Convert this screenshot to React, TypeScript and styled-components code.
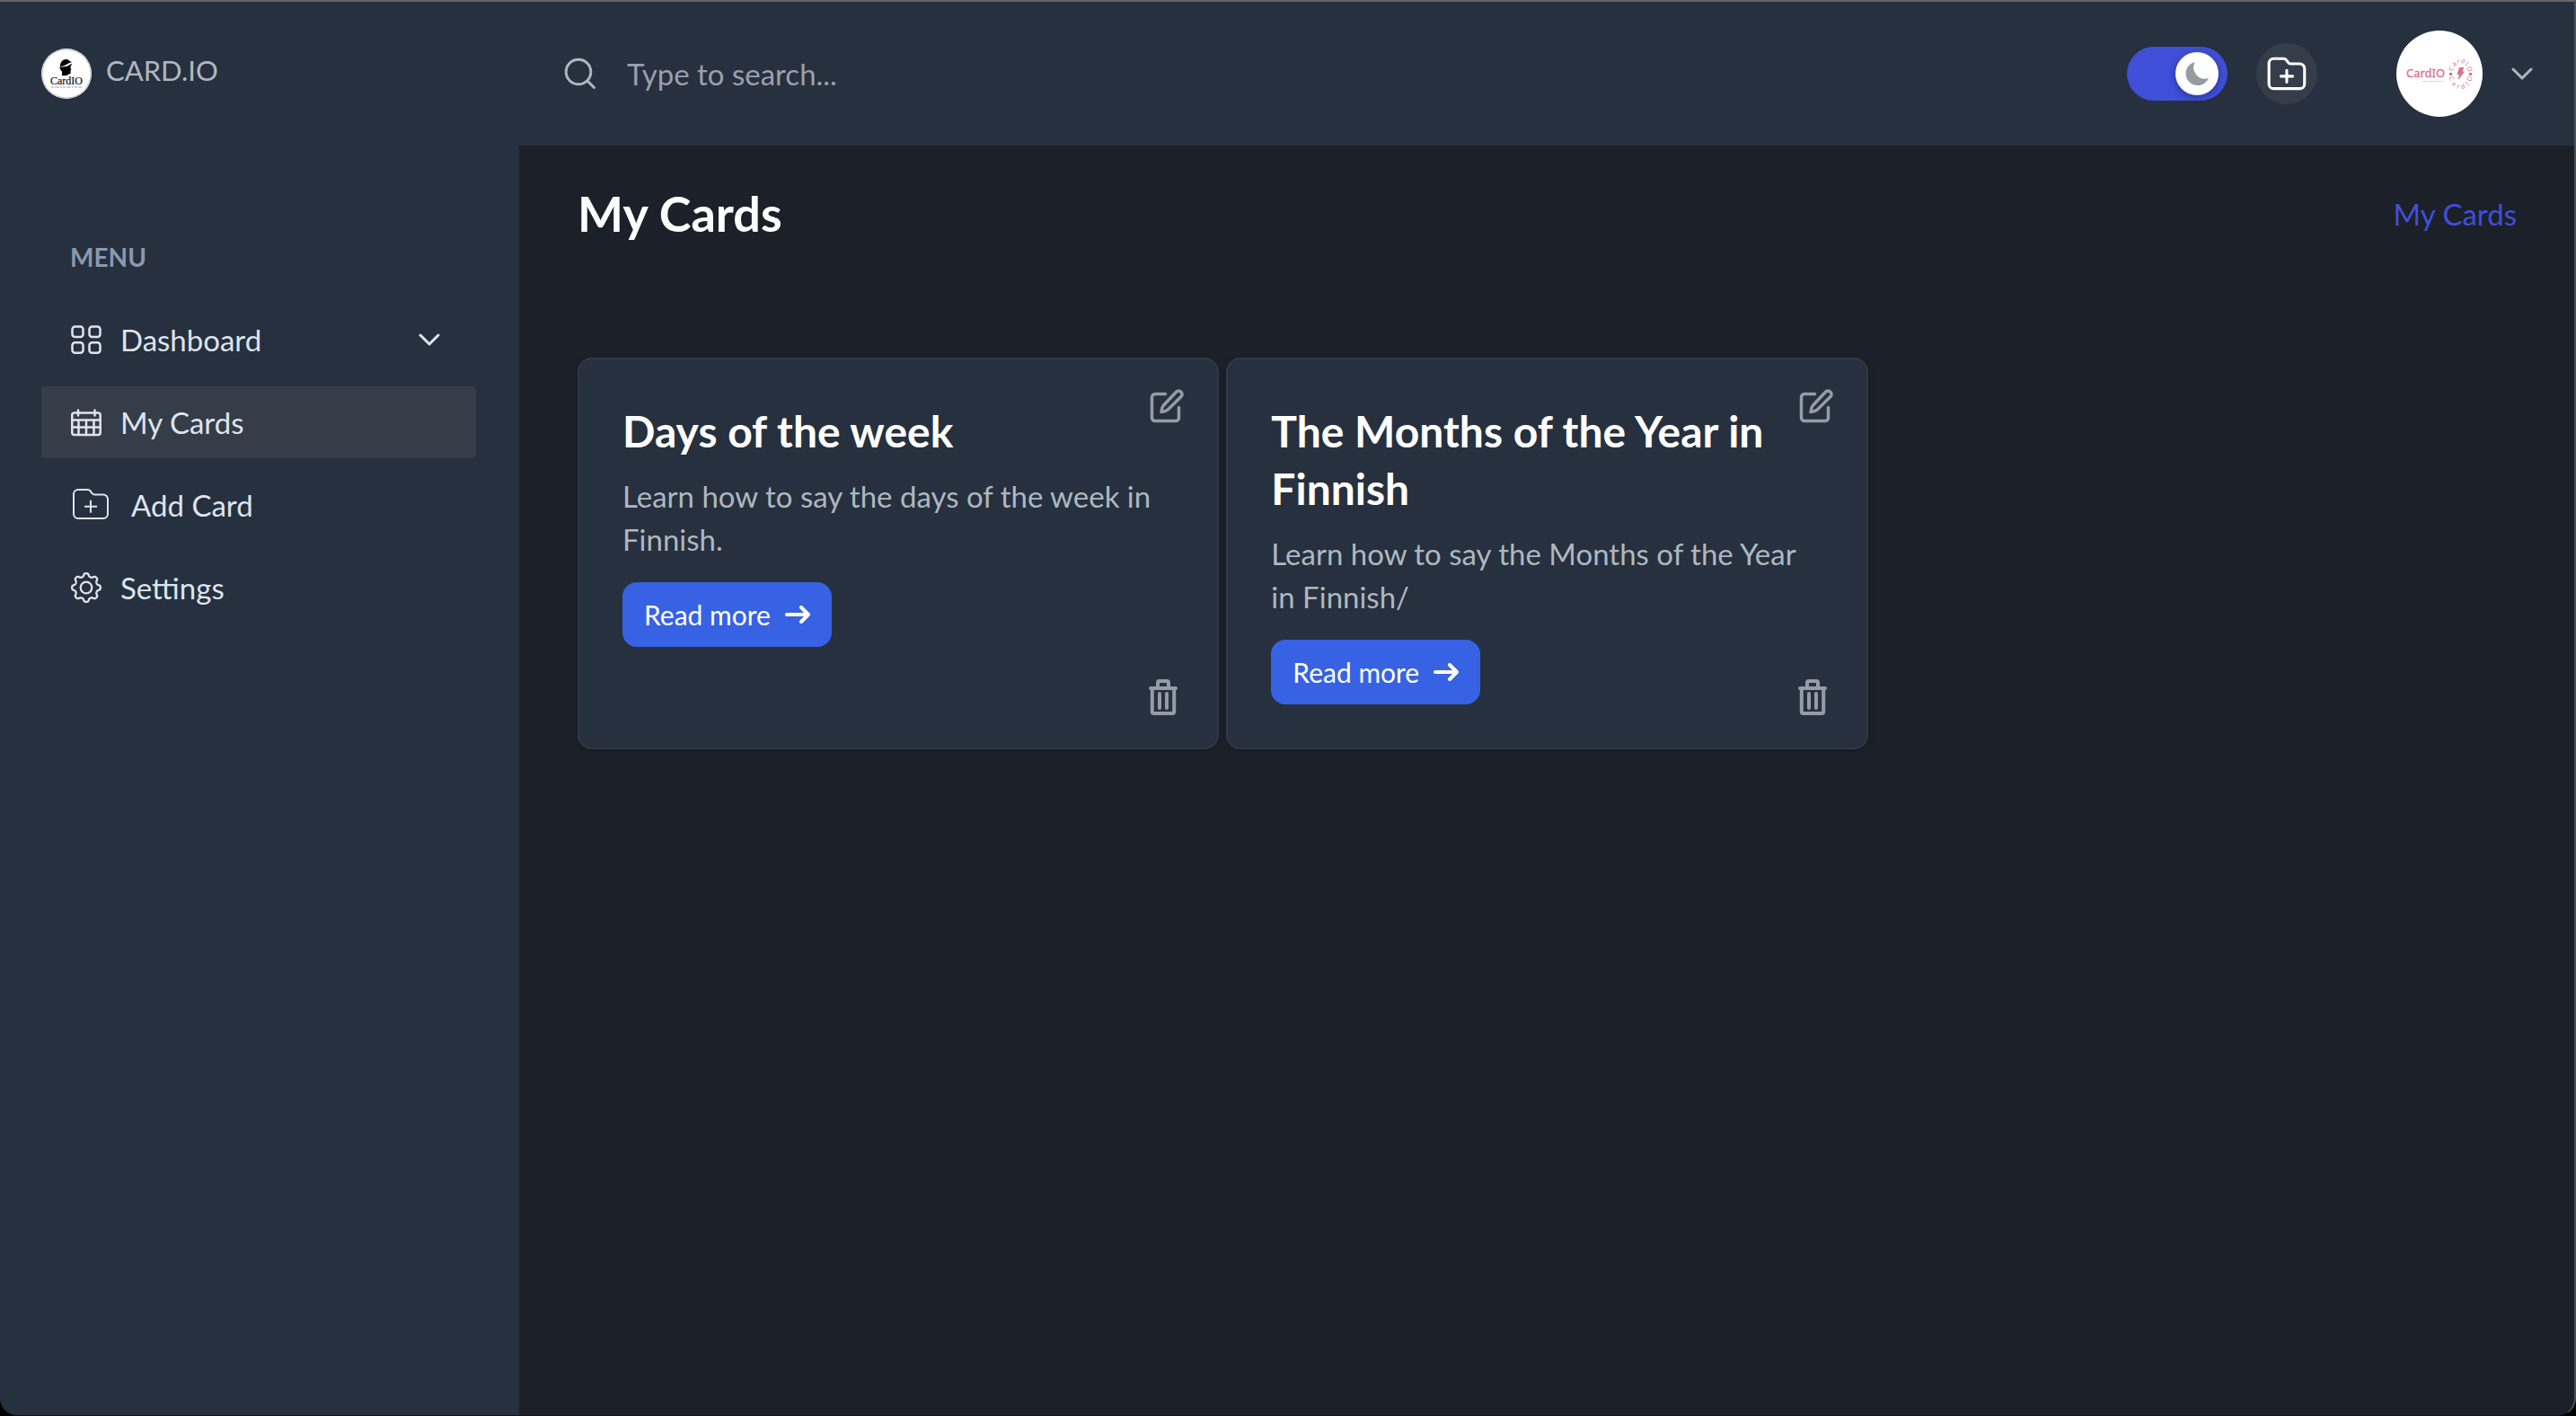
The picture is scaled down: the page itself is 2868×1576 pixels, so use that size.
import React from "react";
import styled, { createGlobalStyle } from "styled-components";

const color = {
  panel: "#26303e",
  page: "#1c2029",
  raised: "#343d48",
  line: "#303a46",
  text: "#dee4ee",
  muted: "#aeb7c0",
  faint: "#8a99af",
  primary: "#404fd8",
  action: "#3762e3",
  icon: "#949ca6",
  pink: "#d6718f",
};

const GlobalStyle = createGlobalStyle`
  *, *::before, *::after { box-sizing: border-box; }
  body {
    margin: 0;
    background: #000;
    font-family: Lato, "Open Sans", sans-serif;
    font-size: 33px;
    line-height: 48px;
    color: ${color.muted};
  }
  h1, h2, p, ul { margin: 0; padding: 0; }
  ul { list-style: none; }
  a { color: inherit; text-decoration: none; }
  button, input { font: inherit; color: inherit; }
  button { border: 0; padding: 0; background: none; cursor: pointer; }
  svg { display: block; flex: none; }
`;

const Shell = styled.div`
  display: flex;
  min-height: 100vh;
  overflow: hidden;
  border-top: 2px solid #696565;
  border-right: 2px solid #4b4f57;
  border-bottom: 1px solid #14161e;
  border-radius: 0 0 20px 20px;
  background: ${color.page};
`;

const Sidebar = styled.aside`
  flex: none;
  width: 578px;
  padding: 52px 48px 52px 46px;
  background: ${color.panel};
`;

const Brand = styled.a`
  display: flex;
  align-items: flex-start;
  gap: 16px;
  font-size: 31px;
`;

const MenuTitle = styled.h2`
  margin: 156px 0 32px;
  padding-left: 32px;
  font-size: 28px;
  line-height: 40px;
  font-weight: 700;
  color: ${color.faint};
`;

const MenuList = styled.ul`
  display: flex;
  flex-direction: column;
  gap: 12px;
`;

const MenuLink = styled.a<{ $active?: boolean }>`
  display: flex;
  align-items: center;
  gap: 20px;
  padding: 16px 40px 16px 32px;
  border-radius: 4px;
  color: ${color.text};
  background: ${(p) => (p.$active ? color.raised : "transparent")};
`;

const MenuLabel = styled.span`
  flex: 1;
`;

const Column = styled.div`
  flex: 1;
  min-width: 0;
`;

const Header = styled.header`
  display: flex;
  align-items: center;
  height: 160px;
  padding: 0 46px 0 50px;
  background: ${color.panel};
`;

const Search = styled.label`
  display: flex;
  flex: 1;
  align-items: center;
  gap: 34px;
`;

const SearchInput = styled.input`
  flex: 1;
  min-width: 0;
  padding: 0;
  border: 0;
  outline: 0;
  background: transparent;
  &::placeholder {
    color: #9b9fac;
    opacity: 1;
  }
`;

const Actions = styled.div`
  display: flex;
  align-items: center;
  gap: 32px;
`;

const Toggle = styled.label`
  display: flex;
  align-items: center;
  justify-content: flex-end;
  position: relative;
  width: 112px;
  height: 60px;
  padding: 0 10px;
  border-radius: 30px;
  background: ${color.primary};
`;

const ToggleInput = styled.input`
  position: absolute;
  inset: 0;
  width: 100%;
  height: 100%;
  margin: 0;
  opacity: 0;
  cursor: pointer;
`;

const Knob = styled.span`
  display: grid;
  place-items: center;
  width: 48px;
  height: 48px;
  border-radius: 50%;
  background: #fff;
  box-shadow: 0 2px 8px rgba(0, 0, 0, 0.35);
`;

const RoundButton = styled.button`
  display: grid;
  place-items: center;
  width: 68px;
  height: 68px;
  padding: 2px 0 0 2px;
  border-radius: 50%;
  background: ${color.raised};
  color: #fff;
`;

const Profile = styled.button`
  display: flex;
  align-items: center;
  gap: 32px;
  margin-left: 56px;
`;

const Main = styled.main`
  padding: 48px 64px 48px 65px;
`;

const Heading = styled.div`
  display: flex;
  align-items: center;
  justify-content: space-between;
  margin-bottom: 132px;
`;

const PageTitle = styled.h1`
  font-size: 54px;
  line-height: 56px;
  font-weight: 700;
  color: #fff;
`;

const Crumb = styled.a`
  && {
    color: ${color.primary};
  }
`;

const CardGrid = styled.div`
  display: grid;
  grid-template-columns: repeat(3, minmax(0, 1fr));
  gap: 8px;
`;

const Card = styled.article`
  position: relative;
  padding: 48px;
  border: 2px solid ${color.line};
  border-radius: 16px;
  background: ${color.panel};
  box-shadow: 0 2px 6px rgba(0, 0, 0, 0.2);
`;

const CardTitle = styled.h2`
  margin-bottom: 16px;
  font-size: 48px;
  line-height: 64px;
  font-weight: 700;
  color: #fff;
`;

const CardText = styled.p`
  margin-bottom: 24px;
`;

const ReadMore = styled.a`
  && {
    display: inline-flex;
    align-items: center;
    gap: 16px;
    padding: 16px 24px;
    border-radius: 16px;
    font-size: 30px;
    line-height: 40px;
    color: #fff;
    background: ${color.action};
    vertical-align: top;
  }
`;

const EditButton = styled.button`
  position: absolute;
  top: 32px;
  right: 36px;
  color: ${color.icon};
`;

const DeleteButton = styled.button`
  position: absolute;
  right: 44px;
  bottom: 36px;
  color: ${color.icon};
`;

const line = {
  fill: "none",
  stroke: "currentColor",
  strokeLinecap: "round",
  strokeLinejoin: "round",
} as const;

const BrandLogo = () => (
  <svg width="56" height="56" viewBox="0 0 56 56" aria-hidden="true">
    <circle cx="28" cy="28" r="28" fill="#fff" />
    <circle cx="28" cy="28" r="27" fill="none" stroke="#b9bcc1" strokeWidth="1" />
    <path
      d="M21 21.5C20.4 15.5 23.5 12 27.5 11.9c2-.1 3.3.7 4 2l2.6 1.2-3.4 1.2-5 2.8-4.2 1.2z"
      fill="#000"
    />
    <path
      d="M21.3 20.7l7.5-1 5.6-3.2-1 2-1 2.3.9 3.2-.8.8.2 2.5c-.2 1.4-1.7 1.3-2.8 1.2l-.8 1.6-6.2.2.3-4.6c-1.5-1.2-2.3-2.8-2.9-5z"
      fill="#000"
    />
    <text
      x="28"
      y="39.500"
      textAnchor="middle"
      fontFamily="'Liberation Serif', serif"
      fontSize="12"
      fill="#111"
      stroke="#111"
      strokeWidth="0.2"
    >
      CardIO
    </text>
    <path d="M11 43h34" stroke="#a2a2a2" strokeWidth="1" strokeDasharray="3 1 5 1 2 1" />
  </svg>
);

/* The word runs twice round an upright oval: over the top, then under the bottom. */
const ringLetters = [..."CardIO"].flatMap((letter, i) => {
  const spread = 68 - i * 27.2;
  return [
    { letter, turn: -spread, side: -1 },
    { letter, turn: spread, side: 1 },
  ];
});

const Avatar = () => (
  <svg width="96" height="96" viewBox="0 0 96 96" aria-hidden="true">
    <circle cx="48" cy="48" r="48" fill="#fff" />
    <g fill={color.pink} fontFamily="'Noto Sans', sans-serif">
      <text x="11" y="52" fontSize="13" stroke={color.pink} strokeWidth="0.300">
        CardIO
      </text>
      {ringLetters.map(({ letter, turn, side }, i) => {
        const angle = (Math.abs(turn) * Math.PI) / 180;
        const dx = Math.sin(angle) * 11 * (side * turn > 0 ? -1 : 1);
        const dy = Math.cos(angle) * 14.5 * side;
        return (
          <text
            key={i}
            fontSize="7"
            textAnchor="middle"
            transform={`translate(${(71.5 + dx).toFixed(2)} ${(48 + dy).toFixed(2)}) rotate(${turn.toFixed(1)})`}
            y="2.500"
          >
            {letter}
          </text>
        );
      })}
      <circle cx="60.500" cy="48.500" r="1.800" />
      <circle cx="82.500" cy="48.500" r="1.800" />
      <path d="M70 41h5.500l-2 4.500h2.500L68.500 55.500l1.500-6.500h-2.500z" />
    </g>
    <path d="M29 56.500h24" stroke="#edc3cf" strokeWidth="1" strokeDasharray="4 1 2 1" />
  </svg>
);

const Chevron = ({ width = 3 }: { width?: number }) => (
  <svg width="24" height="14" viewBox="0 0 24 14" strokeWidth={width} {...line} aria-hidden="true">
    <path d="M2 2l10 10L22 2" />
  </svg>
);

const GridIcon = () => (
  <svg width="36" height="36" viewBox="0 0 36 36" strokeWidth="2.5" {...line} aria-hidden="true">
    <rect x="2.500" y="3.500" width="12" height="11.500" rx="3" />
    <rect x="21.500" y="3.500" width="12" height="11.500" rx="3" />
    <rect x="2.500" y="21.200" width="12" height="11.500" rx="3" />
    <rect x="21.500" y="21.200" width="12" height="11.500" rx="3" />
  </svg>
);

const CalendarIcon = () => (
  <svg width="36" height="36" viewBox="0 0 36 36" strokeWidth="2.500" {...line} aria-hidden="true">
    <rect x="2.300" y="7.500" width="31.400" height="24.500" rx="2.500" />
    <path d="M2.300 15.500h31.400M2.300 23.500h31.400M9.500 15.500V32M18 15.500V32M26.500 15.500V32M9 4.500v6M27.500 4.500v6" />
  </svg>
);

const FolderPlusIcon = ({ width, size }: { width: number; size: number }) => (
  <svg
    width={size}
    height={size}
    viewBox="0 0 48 48"
    strokeWidth={width}
    {...line}
    aria-hidden="true"
  >
    <path d="M4 12a5 5 0 0 1 5-5h10.500c1.500 0 2.500.6 3.300 1.700l1.400 2c.9 1.300 1.900 1.800 3.300 1.800H37a5 5 0 0 1 5 5V34a5 5 0 0 1-5 5H9a5 5 0 0 1-5-5z" />
    <path d="M23 19.500v12.500M16.800 25.800h12.500" />
  </svg>
);

/* Outline of the cog: a circle whose radius swells into eight rounded teeth. */
const cogOutline = Array.from({ length: 160 }, (_, i) => {
  const angle = (i / 160) * Math.PI * 2;
  const radius = 14.2 + 1.7 * Math.tanh(1.8 * Math.cos(8 * angle));
  return `${(18 + radius * Math.cos(angle)).toFixed(2)},${(18 + radius * Math.sin(angle)).toFixed(2)}`;
}).join(" ");

const CogIcon = () => (
  <svg width="36" height="36" viewBox="0 0 36 36" strokeWidth="2.300" {...line} aria-hidden="true">
    <polygon points={cogOutline} />
    <circle cx="18" cy="18" r="6.300" />
  </svg>
);

const SearchIcon = () => (
  <svg width="36" height="36" viewBox="0 0 36 36" strokeWidth="3" {...line} aria-hidden="true">
    <circle cx="16" cy="16" r="13.800" />
    <path d="M26 26l7.500 7.500" />
  </svg>
);

const MoonIcon = () => (
  <svg width="28" height="28" viewBox="0 0 28 28" aria-hidden="true">
    <path d="M11.800 1A13.200 13.200 0 1 0 27 18.800 12.500 12.500 0 0 1 11.800 1z" fill="#969aa1" />
  </svg>
);

const EditIcon = () => (
  <svg width="40" height="40" viewBox="0 0 40 40" strokeWidth="3.500" {...line} aria-hidden="true">
    <path d="M18.500 6.500H7A3.500 3.500 0 0 0 3.500 10v23A3.500 3.500 0 0 0 7 36.500h23a3.500 3.500 0 0 0 3.500-3.500V21.500" />
    <path d="M30.500 4.200a3.800 3.800 0 0 1 5.400 5.400L21 24.200c-2 1.700-4.500 2-7 2.200.2-2.600.7-5.200 2.400-7.200z" />
  </svg>
);

const TrashIcon = () => (
  <svg width="32" height="40" viewBox="0 0 32 40" strokeWidth="4" {...line} aria-hidden="true">
    <path d="M2 10h28M10 10V4a2 2 0 0 1 2-2h8a2 2 0 0 1 2 2v6M3.800 10v26a2 2 0 0 0 2 2h20.400a2 2 0 0 0 2-2V10" />
    <path d="M12 16v16M20 16v16" />
  </svg>
);

const ArrowIcon = () => (
  <svg width="28" height="20" viewBox="0 0 28 20" strokeWidth="4" {...line} aria-hidden="true">
    <path d="M2 10h24M18 2l8 8-8 8" />
  </svg>
);

const menu = [
  { label: "Dashboard", icon: <GridIcon />, expandable: true },
  { label: "My Cards", icon: <CalendarIcon />, active: true },
  { label: "Add Card", icon: <FolderPlusIcon width={2} size={48} /> },
  { label: "Settings", icon: <CogIcon /> },
];

const cards = [
  { title: "Days of the week", text: "Learn how to say the days of the week in Finnish." },
  {
    title: "The Months of the Year in Finnish",
    text: "Learn how to say the Months of the Year in Finnish/",
  },
];

export default function App() {
  return (
    <>
      <GlobalStyle />
      <Shell>
        <Sidebar>
          <Brand href="#">
            <BrandLogo />
            CARD.IO
          </Brand>
          <nav aria-label="Menu">
            <MenuTitle>MENU</MenuTitle>
            <MenuList>
              {menu.map((item) => (
                <li key={item.label}>
                  <MenuLink href="#" $active={item.active}>
                    {item.icon}
                    <MenuLabel>{item.label}</MenuLabel>
                    {item.expandable && <Chevron />}
                  </MenuLink>
                </li>
              ))}
            </MenuList>
          </nav>
        </Sidebar>
        <Column>
          <Header>
            <Search>
              <SearchIcon />
              <SearchInput type="text" placeholder="Type to search..." aria-label="Search" />
            </Search>
            <Actions>
              <Toggle>
                <ToggleInput type="checkbox" defaultChecked aria-label="Dark mode" />
                <Knob>
                  <MoonIcon />
                </Knob>
              </Toggle>
              <RoundButton type="button" aria-label="Add card">
                <FolderPlusIcon width={3} size={50} />
              </RoundButton>
              <Profile type="button" aria-label="Account">
                <Avatar />
                <Chevron />
              </Profile>
            </Actions>
          </Header>
          <Main>
            <Heading>
              <PageTitle>My Cards</PageTitle>
              <Crumb href="#">My Cards</Crumb>
            </Heading>
            <CardGrid>
              {cards.map((card) => (
                <Card key={card.title}>
                  <CardTitle>{card.title}</CardTitle>
                  <CardText>{card.text}</CardText>
                  <ReadMore href="#">
                    Read more
                    <ArrowIcon />
                  </ReadMore>
                  <EditButton type="button" aria-label={`Edit ${card.title}`}>
                    <EditIcon />
                  </EditButton>
                  <DeleteButton type="button" aria-label={`Delete ${card.title}`}>
                    <TrashIcon />
                  </DeleteButton>
                </Card>
              ))}
            </CardGrid>
          </Main>
        </Column>
      </Shell>
    </>
  );
}
